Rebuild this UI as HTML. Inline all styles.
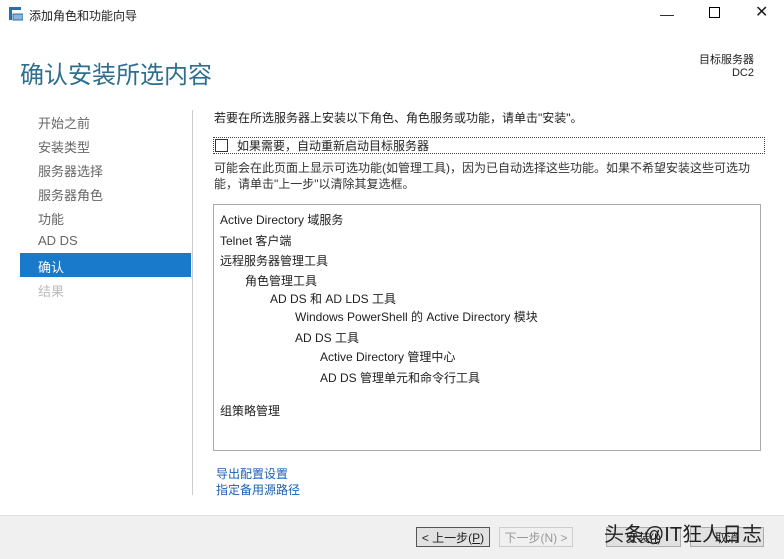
<!DOCTYPE html>
<html><head><meta charset="utf-8"><style>
body{margin:0;width:784px;height:558px;background:#fff;font-family:"Liberation Sans","Microsoft YaHei","Noto Sans CJK SC",sans-serif;position:relative;overflow:hidden;color:#1e1e1e}
.a{position:absolute;white-space:nowrap}
.f12{font-size:12px}
.nav{font-size:13px;color:#666}
.btn{position:absolute;top:527px;height:20px;border:1px solid #adadad;background:#e1e1e1;font-size:12px;text-align:center;line-height:20px;box-sizing:border-box}
</style></head><body>
<div class="a" style="left:9px;top:7px;width:14px;height:14px;">
<svg width="14" height="14"><rect x="0" y="0" width="3" height="13" fill="#2a6fa8"/><rect x="0" y="0" width="12" height="3" fill="#2a6fa8"/><rect x="4" y="7" width="10" height="6" fill="#8fb4d4" stroke="#2a6fa8"/></svg></div>
<div class="a f12" style="left:29px;top:7px">添加角色和功能向导</div>
<div class="a" style="left:660px;top:6px;font-size:14px">—</div>
<div class="a" style="left:709px;top:7px;width:9px;height:9px;border:1px solid #000"></div>
<div class="a" style="left:755px;top:2px;font-size:16px">✕</div>
<div class="a" style="left:0;top:30px;width:784px;height:485px;background:#fff"></div>
<div class="a" style="left:20px;top:55px;font-size:24px;color:#2e6e8e">确认安装所选内容</div>
<div class="a" style="right:30px;top:54px;font-size:11px;text-align:right;line-height:13px">目标服务器<br>DC2</div>
<div class="a nav" style="left:38px;top:113px">开始之前</div>
<div class="a nav" style="left:38px;top:137px">安装类型</div>
<div class="a nav" style="left:38px;top:161px">服务器选择</div>
<div class="a nav" style="left:38px;top:185px">服务器角色</div>
<div class="a nav" style="left:38px;top:209px">功能</div>
<div class="a nav" style="left:38px;top:233px">AD DS</div>
<div class="a" style="left:20px;top:253px;width:171px;height:24px;background:#1979ca"></div>
<div class="a" style="left:38px;top:257px;font-size:13px;color:#fff">确认</div>
<div class="a nav" style="left:38px;top:281px;color:#bbb">结果</div>
<div class="a" style="left:192px;top:110px;width:1px;height:385px;background:#ccc"></div>
<div class="a f12" style="left:214px;top:109px">若要在所选服务器上安装以下角色、角色服务或功能，请单击"安装"。</div>
<div class="a" style="left:213px;top:137px;width:550px;height:15px;border:1px dotted #444"></div>
<div class="a" style="left:215px;top:139px;width:11px;height:11px;border:1px solid #333;background:#fff"></div>
<div class="a f12" style="left:237px;top:137px">如果需要，自动重新启动目标服务器</div>
<div class="a f12" style="left:214px;top:160px;line-height:16px;color:#333;white-space:normal;width:550px">可能会在此页面上显示可选功能(如管理工具)，因为已自动选择这些功能。如果不希望安装这些可选功能，请单击"上一步"以清除其复选框。</div>
<div class="a" style="left:213px;top:204px;width:546px;height:245px;border:1px solid #aaa"></div>
<div class="a f12" style="left:220px;top:211px">Active Directory 域服务</div>
<div class="a f12" style="left:220px;top:232px">Telnet 客户端</div>
<div class="a f12" style="left:220px;top:252px">远程服务器管理工具</div>
<div class="a f12" style="left:245px;top:272px">角色管理工具</div>
<div class="a f12" style="left:270px;top:290px">AD DS 和 AD LDS 工具</div>
<div class="a f12" style="left:295px;top:308px">Windows PowerShell 的 Active Directory 模块</div>
<div class="a f12" style="left:295px;top:329px">AD DS 工具</div>
<div class="a f12" style="left:320px;top:348px">Active Directory 管理中心</div>
<div class="a f12" style="left:320px;top:369px">AD DS 管理单元和命令行工具</div>
<div class="a f12" style="left:220px;top:402px">组策略管理</div>
<div class="a f12" style="left:216px;top:465px;color:#1a5fb4">导出配置设置</div>
<div class="a f12" style="left:216px;top:481px;color:#1a5fb4">指定备用源路径</div>
<div class="a" style="left:0;top:515px;width:784px;height:43px;background:#f0f0f0;border-top:1px solid #dfdfdf"></div>
<div class="btn" style="left:416px;width:74px;border-color:#555">&lt; 上一步(<u>P</u>)</div>
<div class="btn" style="left:499px;width:74px;color:#999;background:#f0f0f0;border-color:#ccc">下一步(N) &gt;</div>
<div class="btn" style="left:606px;width:75px">安装(<u>I</u>)</div>
<div class="btn" style="left:690px;width:74px">取消</div>
<div class="a" style="left:604px;top:518px;font-size:20px;color:#222">头条@IT狂人日志</div>
</body></html>
